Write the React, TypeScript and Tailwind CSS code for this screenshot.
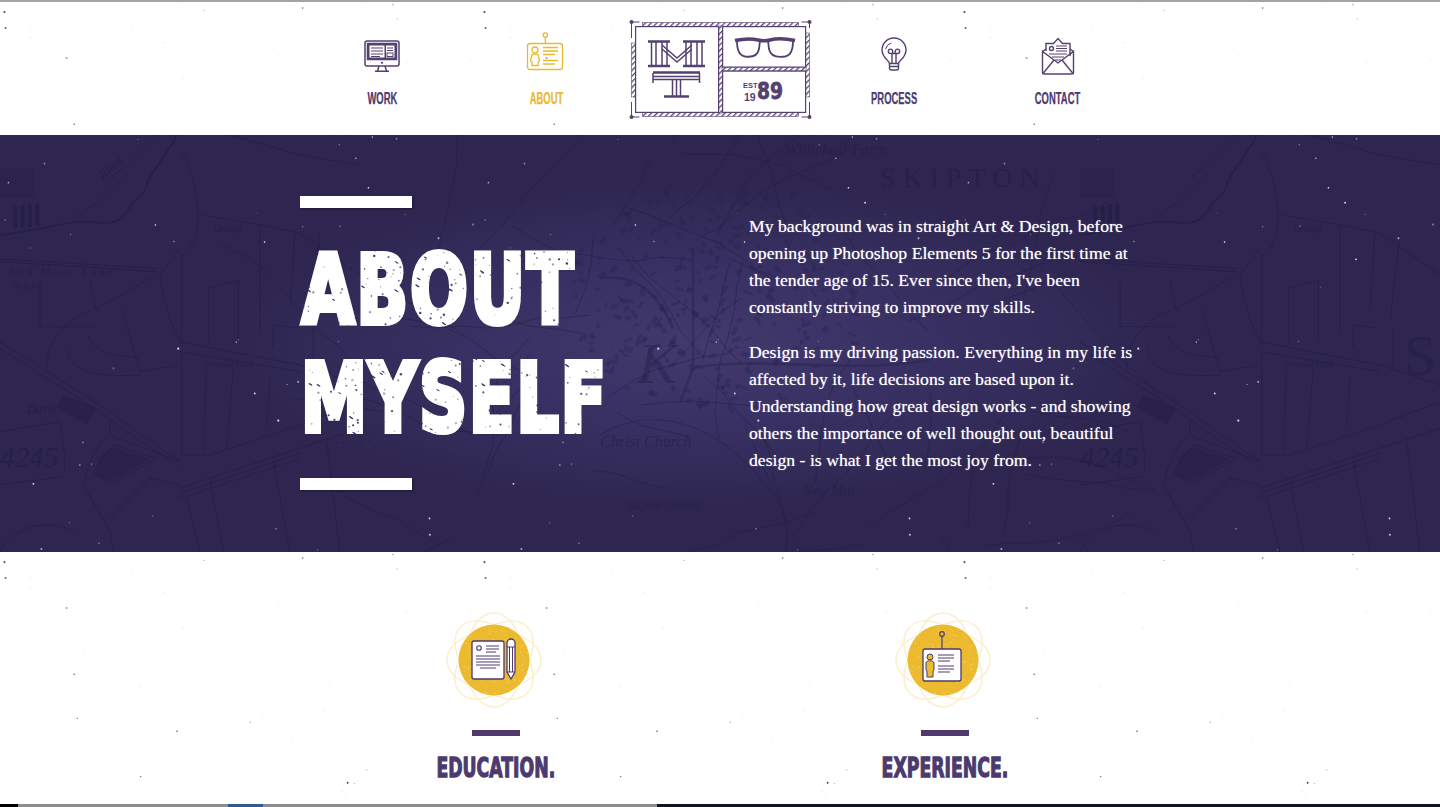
// Seeded random so the speckles stay the same between renders
const makeRandom = (seed: number) => () => {
  seed = (seed + 0x6d2b79f5) | 0;
  let t = Math.imul(seed ^ (seed >>> 15), 1 | seed);
  t = (t + Math.imul(t ^ (t >>> 7), 61 | t)) ^ t;
  return ((t ^ (t >>> 14)) >>> 0) / 4294967296;
};

type Dot = { x: number; y: number; r: number; o: number };

const makeDots = (seed: number, count: number, w: number, h: number, rMin: number, rMax: number): Dot[] => {
  const rnd = makeRandom(seed);
  return Array.from({ length: count }, () => ({
    x: rnd() * w,
    y: rnd() * h,
    r: rMin + rnd() * (rMax - rMin),
    o: 0.25 + rnd() * 0.75,
  }));
};

const darkDots = makeDots(7, 30, 480, 420, 0.4, 1.1);
const faintDots = makeDots(11, 130, 480, 420, 0.4, 0.9);
const lightDots = makeDots(23, 44, 480, 420, 0.4, 1.1);

function Speckles({ id, light }: { id: string; light?: boolean }) {
  return (
    <svg className="absolute inset-0 w-full h-full pointer-events-none" aria-hidden="true">
      <defs>
        <pattern id={id} width="480" height="420" patternUnits="userSpaceOnUse">
          {light
            ? lightDots.map((d, i) => <circle key={i} cx={d.x} cy={d.y} r={d.r} fill="#ffffff" opacity={d.o} />)
            : (
              <>
                {faintDots.map((d, i) => <circle key={i} cx={d.x} cy={d.y} r={d.r} fill="#c9c9c9" opacity={d.o * 0.45} />)}
                {darkDots.map((d, i) => <circle key={`d${i}`} cx={d.x} cy={d.y} r={d.r} fill="#3a3a44" opacity={d.o} />)}
              </>
            )}
        </pattern>
      </defs>
      <rect width="100%" height="100%" fill={`url(#${id})`} />
    </svg>
  );
}

// Wobbly line for the fields in the middle of the map
const wobble = (rnd: () => number, x: number, y: number, steps: number, len: number, angle: number) => {
  let d = `M${x.toFixed(0)} ${y.toFixed(0)}`;
  let a = angle;
  for (let i = 0; i < steps; i++) {
    a += (rnd() - 0.5) * 0.5;
    x += Math.cos(a) * len;
    y += Math.sin(a) * len;
    d += `L${x.toFixed(0)} ${y.toFixed(0)}`;
  }
  return d;
};

const mapRnd = makeRandom(91);
const fieldLines = Array.from({ length: 60 }, () =>
  wobble(mapRnd, 280 + mapRnd() * 860, mapRnd() * 417, 3 + Math.floor(mapRnd() * 5), 26, mapRnd() * 6.28),
);
// Little house blocks of the town
const townBlocks = Array.from({ length: 300 }, () => {
  const a = mapRnd() * 6.28;
  const dist = Math.sqrt(mapRnd());
  return {
    x: 715 + Math.cos(a) * dist * 150,
    y: 160 + Math.sin(a) * dist * 115,
    w: 3 + mapRnd() * 6,
    h: 2 + mapRnd() * 3,
    rot: Math.floor(mapRnd() * 4) * 40 - 60,
  };
});

// Traced from the sheet at 3x, so the numbers are in zoomed pixels
function MapTile({ labels }: { labels: 'all' | 'edge' }) {
  return (
    <g transform="scale(0.3333)">
      <g fill="none" stroke="#221b41" strokeOpacity="0.62" strokeWidth="2.6">
        <path d="M330 130C380 90 430 40 470 0M220 250C280 220 340 160 380 120M0 380L470 410M0 372L470 400" />
        <path d="M0 300C100 290 200 260 250 260S350 280 380 230 430 190 440 150 510 50 530 0" strokeWidth="5" />
        <path d="M480 420L540 340M475 415C380 470 320 510 260 530 170 570 140 640 140 700M120 440V575H290" />
        <path d="M480 420C490 500 510 560 540 620M290 530L270 440M365 520L420 710L540 690" />
        <path d="M265 600C280 650 350 670 420 665M200 640C210 700 260 730 420 720" />
        <path d="M0 620L300 810L540 980M0 640L290 825L540 1000M330 855V900L540 980" />
        <path d="M180 860L0 890M180 860C190 920 200 1000 190 1025L0 1050" />
        <path d="M320 900C280 950 260 1000 250 1050L330 1190L340 1251M330 1150L450 1030L540 1050" />
        <path d="M280 1010L340 930L470 970L330 1050Z" />
        <path d="M545 50C620 200 600 340 545 360V620M625 460V620M625 460L715 435V620M780 270V600M885 290L870 520" />
        <path d="M610 240L780 270L900 295M820 570V640M820 570L900 580M540 620L900 690M540 650L900 710" />
        <path d="M620 680L610 950M700 700L680 940M810 720L800 880M545 660V960L630 960L900 870" />
        <path d="M540 1060L900 940M540 1075L900 955M540 1090L900 970M560 1090L600 1251M630 1040L670 1251M820 980L870 1251" />
        <path d="M900 870L1080 800M900 940L1080 880M900 295L1080 420M900 690L1080 750M940 580V700M960 300L930 560M980 920L1020 1251" />
        <path d="M0 1251C40 1170 140 1150 230 1190M690 0L900 60L1080 90" />
      </g>
      <g fill="#221b41" fillOpacity="0.6">
        <rect x="0" y="100" width="105" height="88" fillOpacity="0.25" />
        <path d="M40 215h12v65H40zM62 210h12v68H62zM84 208h12v68H84zM106 205h12v68H106z" />
        <path d="M300 960l40-22 110 34-120 70-45-22z" fillOpacity="0.3" />
        <path d="M190 780l100 40-30 50-90-55z" fillOpacity="0.35" />
      </g>
      <g fill="#221b41" fillOpacity="0.62" fontFamily="'Liberation Serif', serif" fontStyle="italic">
        <text x="640" y="292" fontSize="28">Drough</text>
        <text x="625" y="695" fontSize="26">Sewing Pach</text>
        <text x="0" y="995" fontSize="88">4245</text>
        {labels === 'all' && (
          <>
            <text x="30" y="420" fontSize="34" letterSpacing="8">Sun Moor Lane</text>
            <text x="40" y="462" fontSize="32">School</text>
            <text x="80" y="835" fontSize="44">Bank</text>
            <text x="310" y="135" fontSize="40" transform="rotate(-42 310 135)">Road</text>
          </>
        )}
      </g>
    </g>
  );
}

function MapLayer() {
  return (
    <svg className="absolute inset-0 w-full h-full pointer-events-none" viewBox="0 0 1440 417" aria-hidden="true">
      <MapTile labels="all" />
      <g transform="translate(1080 0)"><MapTile labels="edge" /></g>
      <g fill="none" stroke="#221b41" strokeOpacity="0.5" strokeWidth="0.9">
        {fieldLines.map((d, i) => <path key={i} d={d} />)}
      </g>
      <g fill="#2a2250" fillOpacity="0.38">
        {townBlocks.map((b, i) => (
          <rect key={i} x={b.x} y={b.y} width={b.w} height={b.h} transform={`rotate(${b.rot} ${b.x} ${b.y})`} />
        ))}
      </g>
      <g fill="none" stroke="#2a2250" strokeOpacity="0.5" strokeWidth="2.5">
        <path d="M693 113V233L680 268M600 143C627 140 653 147 673 193M717 100L750 40L800 0M693 233C760 220 840 240 930 225" />
        <path d="M600 300C650 270 720 280 780 370M745 290L800 417" strokeWidth="1.2" />
      </g>
      <g fill="#221b41" fillOpacity="0.5" fontFamily="'Liberation Serif', serif" fontStyle="italic">
        <text x="880" y="52" fontSize="28" letterSpacing="7" fontStyle="normal">SKIPTON</text>
        <text x="785" y="20" fontSize="16">Whitehall Farm</text>
        <text x="638" y="248" fontSize="58" fillOpacity="0.4">K</text>
        <text x="600" y="312" fontSize="16">Christ Church</text>
        <text x="626" y="374" fontSize="12">Skipton Station</text>
        <text x="803" y="360" fontSize="14">New Mill</text>
        <text x="1404" y="240" fontSize="58" fontStyle="normal">S</text>
      </g>
    </svg>
  );
}

const headingDots = makeDots(41, 420, 320, 200, 0.4, 1.25);
const headingDashes = makeDots(57, 70, 320, 200, 0.6, 1);

function HeadingSpeckles() {
  return (
    <svg className="absolute left-0 top-[14px] w-[320px] h-[200px] pointer-events-none" viewBox="0 0 320 200" aria-hidden="true">
      {headingDots.map((d, i) => <circle key={i} cx={d.x} cy={d.y} r={d.r} fill="#39305f" opacity={d.o} />)}
      {headingDashes.map((d, i) => (
        <ellipse key={i} cx={d.x} cy={d.y} rx={d.r * 2.6} ry={d.r * 0.8} fill="#39305f" transform={`rotate(32 ${d.x} ${d.y})`} />
      ))}
    </svg>
  );
}

function WorkIcon() {
  return (
    <svg viewBox="0 0 40 40" className="w-10 h-10 overflow-visible" fill="none" stroke="#54416f" strokeWidth="1.5">
      <rect x="3" y="5" width="34" height="25" rx="2" />
      <rect x="5.5" y="7.5" width="29" height="16" fill="#54416f" />
      <rect x="7.5" y="9.5" width="15" height="12" fill="#ffffff" stroke="none" />
      <rect x="24" y="9.5" width="8.5" height="12" fill="#ffffff" stroke="none" />
      <path d="M9 12h12M9 15h12M9 18h12M9 20.5h9M25 12h6M25 14.5h6" strokeWidth="1.2" />
      <rect x="25" y="17" width="6" height="3.5" strokeWidth="1" />
      <circle cx="20" cy="26.8" r="1.1" fill="#54416f" stroke="none" />
      <path d="M17 30l-1.5 5M23 30l1.5 5M13 35.2h14" />
    </svg>
  );
}

function BadgeIcon({ color }: { color: string }) {
  return (
    <svg viewBox="0 0 40 40" className="w-10 h-10 overflow-visible" fill="none" stroke={color} strokeWidth="1.3">
      <circle cx="19.3" cy="-1" r="2.2" />
      <path d="M19.3 1.2V7" />
      <rect x="1.5" y="7.5" width="35" height="26" rx="2.5" />
      <circle cx="9" cy="14" r="3" />
      <path d="M5.500 20c0-2.400 7-2.400 7 0l1 5-1.300.8V29.500H6V25.800L4.500 25z" />
      <path d="M17 11.500h15M17 15h15M17 18.500h12M17 24.500h15M17 28h12" strokeWidth="1.6" />
    </svg>
  );
}

function BulbIcon() {
  return (
    <svg viewBox="0 0 40 40" className="w-10 h-10 overflow-visible" fill="none" stroke="#54416f" strokeWidth="1.4">
      <path d="M15.500 27.500c0-3-7.500-5.500-7.500-13.500a12 12 0 0 1 24 0c0 8-7.500 10.500-7.500 13.500z" />
      <path d="M11.500 13a8.500 8.500 0 0 1 6-6" strokeWidth="1" />
      <path d="M18 27V17.500h-1.500a2.200 2.200 0 1 1 2.200-2.200V17.500h2.600v-2.200a2.200 2.200 0 1 1 2.200 2.200H22V27" />
      <path d="M15.500 27.500V32a2 2 0 0 0 2 2h5a2 2 0 0 0 2-2v-4.500M15.500 30.500h9" />
    </svg>
  );
}

function ContactIcon() {
  return (
    <svg viewBox="0 0 40 40" className="w-10 h-10 overflow-visible" fill="none" stroke="#54416f" strokeWidth="1.4">
      <path d="M8 15V7.500h7.500L20 2.500l4.500 5H32V20" />
      <circle cx="13.500" cy="12.500" r="2" />
      <path d="M18 10h11M18 12.500h11M18 15h11M11 18h18M14 21h12M17 24h6" strokeWidth="1.2" />
      <path d="M4.500 15.500L8 13M35.500 15.500L32 13" />
      <path d="M4.500 15.500V36.500a1.500 1.500 0 0 0 1.500 1.500H34a1.500 1.500 0 0 0 1.500-1.500V15.500L20 27z" />
      <path d="M5 37.500L16 24M35 37.500L24 24" />
    </svg>
  );
}

function Logo() {
  const ink = '#54416f';
  return (
    <svg viewBox="620 10 200 115" className="w-[200px] h-[115px] shrink-0 -mx-2 mt-2" fill="none" aria-label="logo">
      <defs>
        <pattern id="hatch" width="4" height="4" patternUnits="userSpaceOnUse" patternTransform="rotate(45)">
          <rect width="4" height="4" fill="#ffffff" />
          <rect width="1.3" height="4" fill={ink} />
        </pattern>
      </defs>
      <g fill="url(#hatch)" stroke={ink} strokeWidth="0.6">
        <rect x="642.500" y="22.500" width="156" height="4" />
        <rect x="642.500" y="112.500" width="156" height="4" />
        <rect x="631.500" y="43" width="4" height="54" />
        <rect x="805.500" y="33" width="4" height="64" />
        <rect x="718.500" y="26" width="4" height="87" />
        <rect x="722" y="67" width="84" height="4" />
      </g>
      <g fill="#ffffff" stroke={ink} strokeWidth="1.2">
        <rect x="635.600" y="26.600" width="83" height="85.800" />
        <rect x="722.600" y="26.600" width="83" height="40.500" />
        <rect x="722.600" y="71.100" width="83" height="41.300" />
      </g>
      <g fill={ink}>
        <circle cx="631.500" cy="22" r="2" />
        <circle cx="809.500" cy="22" r="2" />
        <circle cx="631.500" cy="117" r="2" />
        <circle cx="809.500" cy="117" r="2" />
      </g>
      <path d="M631.500 22h8M631.500 22v16M809.500 22h-8M809.500 22v6M631.500 117h8M631.500 117v-15M809.500 117h-8M809.500 117v-15" stroke={ink} strokeWidth="1" />
      {/* M and T monogram */}
      <g stroke={ink} fill="none">
        <path d="M648 41.500h22M683 41.500h22M648 66h22M683 66h22" strokeWidth="2.500" />
        <path d="M651.500 41.500V66M656 41.500V66M662 41.500V66M667 41.500V66M686 41.500V66M691 41.500V66M697 41.500V66M702 41.500V66" strokeWidth="1.500" />
        <path d="M662 45l15 13 15-13M662 49l15 13 15-13" strokeWidth="1.500" />
        <path d="M653 72.500h47" strokeWidth="2.500" />
        <path d="M653 73v10M699.500 73v10M653 76.500h47M653 79.500h47" strokeWidth="1.500" />
        <path d="M672.500 80v16M676.500 80v16M680.500 80v16" strokeWidth="1.500" />
        <path d="M664 96.500h25" strokeWidth="2.500" />
      </g>
      {/* Glasses */}
      <g stroke={ink}>
        <path d="M735 40.500c9-2 17-2 23-.5 3.500 1 8.500 1 12 0 6-1.500 15-1.500 25 .5" strokeWidth="3.500" />
        <path d="M737 41c0 8 2 14.500 8 15.500 7 1 12.500 0 14-7.500l1-8.500M793 41c0 8-2 14.500-8 15.500-7 1-14.500 0-16-7.500l-1-8.500" strokeWidth="1.800" fill="none" />
      </g>
      <text x="743" y="88" fontFamily="'Liberation Sans', sans-serif" fontWeight="700" fontSize="7.500" fill={ink}>EST</text>
      <text x="744" y="101" fontFamily="'Liberation Sans', sans-serif" fontWeight="700" fontSize="10.500" fill={ink}>19</text>
      <text x="757" y="99" fontFamily="'DejaVu Sans', sans-serif" fontWeight="700" fontSize="23" fill={ink} stroke={ink} strokeWidth="0.8" textLength="26" lengthAdjust="spacingAndGlyphs">89</text>
    </svg>
  );
}

function NavItem({ label, active, children }: { label: string; active?: boolean; children: React.ReactNode }) {
  return (
    <a className="w-[164px] pt-[34px] flex flex-col items-center">
      {children}
      <span
        className={`mt-[14px] h-[18px] text-[16px] leading-[18px] font-bold font-['Liberation_Sans',sans-serif] inline-block scale-x-[0.59] whitespace-nowrap [-webkit-text-stroke:0.25px_currentColor] ${active ? 'text-[#e9b92f]' : 'text-[#4c3a6e]'}`}
      >
        {label}
      </span>
    </a>
  );
}

const discDots = makeDots(77, 220, 70, 70, 0.3, 0.6);

function Emblem({ children }: { children: React.ReactNode }) {
  return (
    <svg viewBox="-48 -48 96 96" className="w-24 h-24 -ml-[3px]" fill="none">
      <g stroke="#fbeecb" strokeWidth="1.400">
        <ellipse rx="47" ry="29" />
        <ellipse rx="47" ry="29" transform="rotate(45)" />
        <ellipse rx="47" ry="29" transform="rotate(90)" />
        <ellipse rx="47" ry="29" transform="rotate(135)" />
      </g>
      <circle r="35.500" fill="#ebba2e" />
      <g fill="#f6dc8c">
        {discDots
          .filter((d) => Math.hypot(d.x - 35, d.y - 35) < 34)
          .map((d, i) => <circle key={i} cx={d.x - 35} cy={d.y - 35} r={d.r} />)}
      </g>
      {children}
    </svg>
  );
}

function InfoColumn({ title, children }: { title: string; children: React.ReactNode }) {
  return (
    <div className="w-[449px] flex flex-col items-center">
      <Emblem>{children}</Emblem>
      <div className="mt-[22px] w-12 h-1.5 bg-[#4f3a6e]" />
      <h2 className="mt-[15px] text-[27px] leading-[34px] font-bold font-['DejaVu_Sans',sans-serif] text-[#4c3a6e] inline-block scale-x-[0.64] whitespace-nowrap [-webkit-text-stroke:1.3px_#4c3a6e]">
        {title}
      </h2>
    </div>
  );
}

export default function App() {
  return (
    <div className="h-[807px] w-full overflow-hidden flex flex-col bg-white">
      <div className="h-0.5 bg-[#a3a3a3] shrink-0" />

      {/* Navigation */}
      <header className="relative h-[133px] shrink-0 bg-white">
        <Speckles id="speck-top" />
        <nav className="relative flex justify-center">
          <NavItem label="WORK"><WorkIcon /></NavItem>
          <NavItem label="ABOUT" active><BadgeIcon color="#e9b92f" /></NavItem>
          <div className="w-[184px] flex justify-center"><Logo /></div>
          <NavItem label="PROCESS"><BulbIcon /></NavItem>
          <NavItem label="CONTACT"><ContactIcon /></NavItem>
        </nav>
      </header>

      {/* Hero */}
      <section className="relative h-[417px] shrink-0 bg-[radial-gradient(ellipse_470px_165px_at_700px_210px,#423a6e_0%,#383062_50%,#2e2650_100%)] overflow-hidden">
        <MapLayer />
        <Speckles id="speck-hero" light />
        <div className="relative w-[840px] mx-auto pt-[61px] flex">
          <div className="w-[449px] shrink-0">
            <div className="w-28 h-3 bg-white shadow-[1px_1px_2px_rgba(0,0,0,0.35)]" />
            <h1 className="relative mt-[29px] h-[216px] font-['DejaVu_Sans',sans-serif] font-bold text-white text-[94px] leading-[108px] tracking-[3px] [-webkit-text-stroke:6px_#ffffff] [text-shadow:1px_2px_2px_rgba(0,0,0,0.3)]">
              <span className="block origin-left scale-x-[0.72] whitespace-nowrap ml-[2px]">ABOUT</span>
              <span className="block origin-left scale-x-[0.705] whitespace-nowrap ml-[1px]">MYSELF</span>
              <HeadingSpeckles />
            </h1>
            <div className="mt-[25px] w-28 h-3 bg-white shadow-[1px_1px_2px_rgba(0,0,0,0.35)]" />
          </div>
          <div className="pt-[17px] text-white font-['Liberation_Serif',serif] text-[17.7px] leading-[27px] whitespace-nowrap [text-shadow:0_0_1px_rgba(255,255,255,0.6)]">
            <p>
              My background was in straight Art &amp; Design, before<br />
              opening up Photoshop Elements 5 for the first time at<br />
              the tender age of 15. Ever since then, I've been<br />
              constantly striving to improve my skills.
            </p>
            <p className="mt-[18px]">
              Design is my driving passion. Everything in my life is<br />
              affected by it, life decisions are based upon it.<br />
              Understanding how great design works - and showing<br />
              others the importance of well thought out, beautiful<br />
              design - is what I get the most joy from.
            </p>
          </div>
        </div>
      </section>

      {/* Education and experience */}
      <section className="relative h-[252px] shrink-0 bg-white">
        <Speckles id="speck-bottom" />
        <div className="relative pt-[60px] flex justify-center">
          <InfoColumn title="EDUCATION.">
            <rect x="-22" y="-19" width="32" height="38" rx="2" fill="#ffffff" stroke="#4f3a6e" strokeWidth="1.300" />
            <circle cx="-15" cy="-12" r="2.300" stroke="#4f3a6e" strokeWidth="1.100" />
            <path d="M-8-14H5M-8-11H5M-8-8H2M-18-4H6M-18-1H6M-18 2H6M-18 5H6M-14 8H2" stroke="#4f3a6e" strokeWidth="1" />
            <path d="M13-17a4 4 0 0 1 8 0V12l-4 7-4-7z" fill="#ffffff" stroke="#4f3a6e" strokeWidth="1.300" />
            <path d="M13-13h8M15.500-13V12M18.500-13V12M13 12h8" stroke="#4f3a6e" strokeWidth="1" />
          </InfoColumn>
          <InfoColumn title="EXPERIENCE.">
            <circle cx="-1" cy="-26" r="2.300" fill="#ebba2e" stroke="#4f3a6e" strokeWidth="1.200" />
            <path d="M-1-24V-11" stroke="#4f3a6e" strokeWidth="1.200" />
            <rect x="-20" y="-11" width="38" height="32" rx="2" fill="#ffffff" stroke="#4f3a6e" strokeWidth="1.300" />
            <circle cx="-13" cy="-3" r="3" fill="#ebba2e" stroke="#4f3a6e" strokeWidth="1" />
            <path d="M-17 3c0-3 8-3 8 0v7l-1 1v6h-6v-6l-1-1z" fill="#ebba2e" stroke="#4f3a6e" strokeWidth="1" />
            <path d="M-5-5H11M-5-2H11M-5 1H7M-5 6H11M-5 9H11M-5 12H7" stroke="#4f3a6e" strokeWidth="1.200" />
          </InfoColumn>
        </div>
      </section>

      {/* Strip of desktop showing under the window */}
      <div className="h-[3px] shrink-0 flex">
        <div className="w-[18px] bg-black" />
        <div className="w-[210px] bg-[#8c8c8c]" />
        <div className="w-[35px] bg-[#2f5a94]" />
        <div className="w-[394px] bg-[#8c8c8c]" />
        <div className="flex-1 bg-[#10161d]" />
      </div>
    </div>
  );
}
